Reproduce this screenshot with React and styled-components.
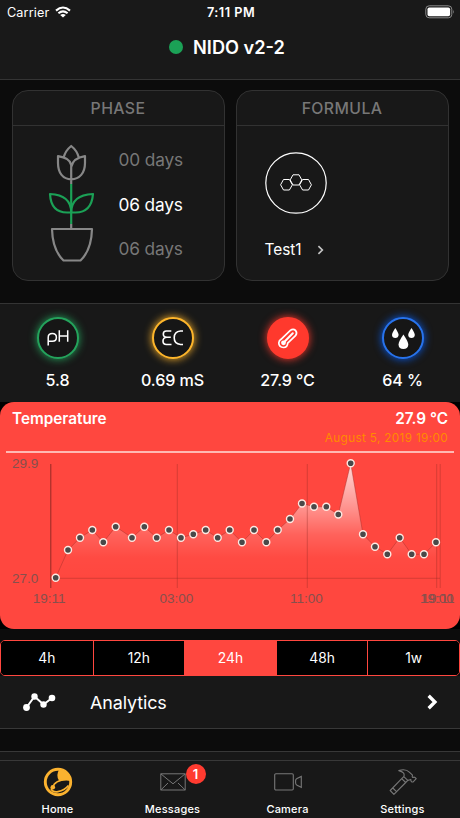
import { useState } from 'react';
import styled, { createGlobalStyle } from 'styled-components';

const GlobalStyle = createGlobalStyle`
  * {
    box-sizing: border-box;
  }

  body {
    margin: 0;
    background: #0c0c0c;
    color: #fff;
    font-family: Inter, 'Liberation Sans', sans-serif;
  }

  button {
    margin: 0;
    padding: 0;
    border: 0;
    background: none;
    color: inherit;
    font: inherit;
  }
`;

const Screen = styled.div`
  display: flex;
  flex-direction: column;
  width: 460px;
  height: 818px;
  overflow: hidden;
`;

const Header = styled.header`
  height: 80px;
  flex: none;
  background: #191919;
  border-bottom: 1px solid #343434;
`;

const StatusBar = styled.div`
  display: grid;
  grid-template-columns: 1fr auto 1fr;
  align-items: center;
  height: 24px;
  padding: 0 5px 0 7px;
  font-size: 12.7px;

  & > svg {
    justify-self: end;
  }
`;

const Carrier = styled.div`
  display: flex;
  align-items: center;
  gap: 6px;
  letter-spacing: 0.1px;
`;

const Clock = styled.div`
  font-weight: 600;
  letter-spacing: 0.5px;
`;

const Title = styled.h1`
  display: flex;
  align-items: center;
  justify-content: center;
  gap: 10px;
  height: 45px;
  margin: 0;
  padding-right: 6px;
  font-size: 18.2px;
  font-weight: 600;
  letter-spacing: 0;
`;

const Dot = styled.span`
  width: 14px;
  height: 14px;
  border-radius: 50%;
  background: #1ba156;
`;

const Cards = styled.section`
  display: grid;
  grid-template-columns: 213px 213px;
  gap: 11px;
  height: 223px;
  flex: none;
  padding: 10px 11px 22px 11.5px;
`;

const Card = styled.div`
  display: flex;
  flex-direction: column;
  background: #181818;
  border: 1px solid #323232;
  border-radius: 16px;
`;

const CardTitle = styled.h2`
  height: 35px;
  margin: 0;
  border-bottom: 1px solid #323232;
  color: #777;
  font-size: 15.8px;
  font-weight: 500;
  letter-spacing: 0.4px;
  line-height: 35px;
  text-align: center;
`;

const PhaseBody = styled.div`
  display: flex;
  padding: 12px 0 0 34px;
  gap: 24px;
`;

const PhaseList = styled.div`
  display: flex;
  flex-direction: column;
`;

const Days = styled.div`
  height: 44.5px;
  color: ${(props) => (props.$active ? '#fff' : '#777')};
  font-size: 17.3px;
  letter-spacing: -0.15px;
  line-height: 44px;
`;

const FormulaBody = styled.div`
  padding: 26px 0 0 28px;
`;

const FormulaName = styled.div`
  display: flex;
  align-items: center;
  gap: 15px;
  margin-top: 22px;
  font-size: 15.4px;
  line-height: 20px;
`;

const Sensors = styled.section`
  display: grid;
  grid-template-columns: repeat(4, 1fr);
  height: 99px;
  flex: none;
  border-top: 1px solid #343434;
  background: #181818;
`;

const Sensor = styled.div`
  display: flex;
  flex-direction: column;
  align-items: center;
  padding-top: 13px;
`;

const Ring = styled.div`
  display: flex;
  align-items: center;
  justify-content: center;
  width: 42px;
  height: 42px;
  border: 2px solid ${(props) => props.$color};
  border-radius: 50%;
  background: ${(props) => (props.$filled ? props.$color : '#161616')};
  box-shadow: 0 0 9px ${(props) => props.$glow || props.$color};
`;

const Reading = styled.div`
  margin-top: 11px;
  font-size: 16.1px;
  font-weight: 500;
  letter-spacing: -0.1px;
  line-height: 20px;
`;

const ChartWrap = styled.section`
  height: 227px;
  flex: none;
  background: #000;
`;

const ChartCard = styled.div`
  height: 100%;
  border-radius: 14px;
  background: #ff473f;
`;

const ChartHead = styled.div`
  display: grid;
  grid-template-columns: 1fr auto;
  grid-template-rows: 20px 20px;
  height: 51px;
  margin: 0 6px;
  padding: 7px 6px 0;
  border-bottom: 2px solid #ffb9b3;
  font-size: 15.3px;
  font-weight: 600;
  line-height: 20px;

  & > span:nth-child(2) {
    text-align: right;
  }
`;

const ChartDate = styled.span`
  grid-column: 1 / 3;
  color: #ff8a00;
  font-size: 11.8px;
  font-weight: 400;
  letter-spacing: 0.32px;
  line-height: 19px;
  text-align: right;
`;

const Chart = styled.svg`
  display: block;

  text {
    fill: #86504d;
    font-family: 'Liberation Sans', Arial, sans-serif;
    font-size: 13.5px;
    text-anchor: middle;
  }
`;

const Segments = styled.div`
  display: grid;
  grid-template-columns: repeat(5, 1fr);
  flex: none;
  height: 36px;
  margin-top: 11px;
  overflow: hidden;
  border: 1px solid #ff473f;
  border-radius: 5px;
  background: #000;
`;

const Segment = styled.button`
  background: ${(props) => (props.$active ? '#ff473f' : '#000')};
  font-size: 13.8px;
  letter-spacing: 0.1px;

  & + & {
    border-left: 1px solid #ff473f;
  }
`;

const AnalyticsRow = styled.div`
  display: flex;
  align-items: center;
  height: 53px;
  flex: none;
  padding: 0 22px;
  border-bottom: 1px solid #383838;
  background: #181818;
`;

const AnalyticsLabel = styled.span`
  flex: 1;
  margin-left: 34px;
  font-size: 17.9px;
  letter-spacing: -0.1px;
`;

const NextRow = styled.div`
  height: 9px;
  flex: none;
  margin-top: 22px;
  border-top: 1px solid #383838;
  background: #181818;
`;

const TabBar = styled.nav`
  display: grid;
  grid-template-columns: repeat(4, 1fr);
  flex: 1;
  border-top: 1px solid #383838;
  background: #181818;
`;

const Tab = styled.button`
  display: flex;
  flex-direction: column;
  align-items: center;
  padding-top: 5px;
  font-size: 11px;
  font-weight: 500;
  letter-spacing: 0.2px;
  line-height: 14px;
`;

const TabIcon = styled.span`
  position: relative;
  display: flex;
  align-items: center;
  justify-content: center;
  height: 32px;
  margin-bottom: 4px;
`;

const Badge = styled.span`
  position: absolute;
  top: -2px;
  left: 26px;
  width: 20px;
  height: 20px;
  border-radius: 50%;
  background: #ff3b30;
  font-size: 13px;
  font-weight: 600;
  line-height: 20px;
  text-align: center;
`;

const WifiIcon = () => (
  <svg width="16" height="12" viewBox="0 0 16 12">
    <path d="M8 11.6 5.2 8.900Q8 6.900 10.800 8.900Z" fill="#fff" />
    <path d="M3.400 7.200Q8 3.400 12.600 7.200M1 4.600Q8-1.600 15 4.600" fill="none" stroke="#fff" strokeWidth="2.100" />
  </svg>
);

const BatteryIcon = () => (
  <svg width="30" height="14" viewBox="0 0 30 14">
    <rect x="0.8" y="0.8" width="26" height="12" rx="3.4" fill="none" stroke="#8a8a8a" />
    <rect x="2.5" y="2.4" width="22.6" height="8.8" rx="1.8" fill="#fff" />
    <path d="M28.2 4.8q1.4 2 0 4z" fill="#8a8a8a" />
  </svg>
);

const PlantIcon = () => (
  <svg width="48" height="130" viewBox="46 138 48 130" fill="none" strokeWidth="2.200" strokeLinejoin="round">
    <g stroke="#878787">
      <path d="M70.2 184V165Q69 158 57 156.2V163C57 173 62 179.3 70.2 179.3C78.5 179.3 84 173 84 163V156.2Q72 158 70.2 167" />
      <path d="M62.6 157.5Q64.5 150.5 70.2 146Q76 150.5 77.8 157.5" />
      <path d="M70.2 224V228M51 229H91Q90.5 250 79.5 260.5H62.5Q51.500 250 51 229Z" />
    </g>
    <g stroke="#1ba156">
      <path d="M70.2 184V224" />
      <path d="M70.2 212.5Q70.2 195 49 194Q50 212.5 66 212.5H74.5Q90.5 212.5 92 194Q70.2 195 70.2 212.5" />
    </g>
  </svg>
);

const FormulaIcon = () => (
  <svg width="62" height="62" viewBox="0 0 62 62" fill="none" stroke="#fff">
    <circle cx="31" cy="31" r="30.2" strokeWidth="1.2" />
    <path d="M28 22.8H34L36.8 27.9L34 33H28L25.2 27.9Z" />
    <path d="M18.500 27.500H24.4L27.4 32.8L24.4 38H18.500L15.6 32.8Z" />
    <path d="M37.600 27.500H43.500L46.4 32.8L43.500 38H37.600L34.6 32.8Z" />
  </svg>
);

const ChevronIcon = ({ width, height, color, weight }) => (
  <svg width={width} height={height} viewBox="0 0 8 12" fill="none" stroke={color} strokeWidth={weight}>
    <path d="M1.500 1.300 6.200 6 1.500 10.700" />
  </svg>
);

const PhIcon = () => (
  <svg width="24" height="20" viewBox="0 0 24 20" fill="none" stroke="#fff" strokeWidth="1.5">
    <path d="M2.200 17.500V9.500C2.200 6.900 4 5.600 6.300 5.600C8.800 5.600 10.400 7.200 10.400 9.400C10.400 11.700 8.800 13.200 6.300 13.200H2.200" />
    <path d="M13.300 2.300V13.800M21.700 2.300V13.800M13.300 8H21.700" />
  </svg>
);

const EcIcon = () => (
  <svg width="24" height="18" viewBox="0 0 24 18" fill="none" stroke="#fff" strokeWidth="1.6">
    <path d="M10.300 2H5.300Q2.300 2 2.300 5Q2.300 8.300 6 8.300H9.800M6 8.300Q2 8.300 2 12Q2 15.500 5.500 15.500H10.500" />
    <path d="M22 2H19.500Q13.200 2.500 13.200 8.800Q13.200 15 19.500 15.500H22" />
  </svg>
);

const ThermometerIcon = () => (
  <svg width="24" height="24" viewBox="0 0 24 24" fill="none" stroke="#fff">
    <path d="M5 13.300 14.300 4.400Q17.200 2.300 19.600 4.500Q21.600 7 19.500 9.700L11.700 17.200Q11.500 21.300 7.500 21.500Q2.900 21 2.800 16.900Q3 14.600 5 13.300Z" strokeWidth="1.7" />
    <path d="M7.500 16.800 16.800 7.200" strokeWidth="2" strokeLinecap="round" />
    <circle cx="7.500" cy="16.800" r="2.4" fill="#fff" stroke="none" />
  </svg>
);

const DropsIcon = () => (
  <svg width="26" height="26" viewBox="0 0 26 26" fill="#fff">
    <path d="M5.300 3Q8.600 8 8.600 10Q8.300 13 5.300 13Q2.200 13 2 10Q2 8 5.300 3Z" />
    <path d="M21.500 3Q24.800 8 24.800 10Q24.500 13 21.500 13Q18.400 13 18.200 10Q18.200 8 21.500 3Z" />
    <path d="M13.400 9.500Q18.300 16.700 18.300 19.700Q17.800 24 13.400 24Q8.900 24 8.500 19.700Q8.500 16.700 13.400 9.500Z" />
  </svg>
);

const AnalyticsIcon = () => (
  <svg width="34" height="20" viewBox="0 0 34 20" fill="#fff">
    <path d="M4.500 15.500 12.500 4.500 21.500 12.500 30 6" fill="none" stroke="#fff" strokeWidth="2" />
    <circle cx="4.500" cy="15.500" r="3.4" />
    <circle cx="12.500" cy="4.500" r="3.2" />
    <circle cx="21.500" cy="12.500" r="3.2" />
    <circle cx="30" cy="6" r="3.3" />
  </svg>
);

const HomeIcon = () => (
  <svg width="30" height="30" viewBox="0 0 30 30">
    <circle cx="15" cy="15" r="12.7" fill="none" stroke="#fbb22f" strokeWidth="2.9" />
    <path d="M16.500 2Q12.300 8.500 16.200 14Q21.500 11.900 28 12.600Q27 5 20.500 2.700Z" fill="#fbb22f" />
    <path d="M28 13.300C22 11.600 14 13.500 11.200 17.300Q10 19 10.600 20.500" fill="none" stroke="#fbb22f" strokeWidth="1.700" />
    <circle cx="9.800" cy="20.300" r="2.300" fill="#fbb22f" />
    <path d="M8 21.500Q9.500 25.600 15 24.600Q21.500 23.500 25.500 18.500" fill="none" stroke="#fbb22f" strokeWidth="1.800" />
  </svg>
);

const MailIcon = () => (
  <svg width="26" height="18" viewBox="0 0 26 18" fill="none" stroke="#777">
    <path d="M0.800 0.800H25.200V17H0.800ZM0.800 0.800 13 10.800 25.200 0.800M0.800 17 8 10M25.200 17 18 10" />
  </svg>
);

const CameraIcon = () => (
  <svg width="28" height="18" viewBox="0 0 28 18" fill="none" stroke="#777" strokeWidth="1.1">
    <rect x="0.7" y="0.7" width="18.600" height="16.300" rx="1.2" />
    <path d="M27.300 3.400V14.300L23 12.200Q21.600 11.500 21.600 10V7.600Q21.600 6.200 23 5.500Z" />
  </svg>
);

const HammerIcon = () => (
  <svg width="28" height="28" viewBox="0 0 28 28" fill="none" stroke="#777" strokeWidth="1.1" strokeLinejoin="round">
    <path d="M1.200 22.500 12.700 10.700 16.700 14.500 4.900 26.300ZM3.800 20 7.500 23.700M12.700 10.700 14.800 8.600Q16.500 4.300 9.800 2.600Q16.500 0.300 20.600 4.300L23.500 7.200Q22.800 9.300 24 9.500Q25.500 8.500 27.200 10.600L24.200 13.900Q21.800 14.500 21.800 11.400Q20.200 12 18.800 12.400L16.700 14.500M14.800 8.600 18.800 12.400" />
  </svg>
);

const points = [
  [55.7, 577.7], [68, 550], [80, 537.7], [92.3, 530], [103.3, 542.3], [115.7, 526.7],
  [132, 537.7], [144.3, 526.7], [156.7, 537.7], [169, 530], [181, 537.7], [193.3, 534.3],
  [205.7, 530], [217.7, 537.7], [229.7, 530], [242, 542.3], [254, 530], [266.3, 542.3],
  [277.7, 530], [290, 519], [302, 503.5], [314, 506.8], [326.3, 506.8], [338.3, 514.5],
  [350.7, 463.3], [363, 534.3], [375, 546.7], [387.3, 554.3], [399.7, 537.7], [411.7, 554.3],
  [424, 554.3], [436, 542.3],
];

const line = points.map((p) => p.join(',')).join(' ');

const TemperatureChart = () => (
  <Chart width="460" height="175" viewBox="0 453 460 175">
    <defs>
      <linearGradient id="area" gradientUnits="userSpaceOnUse" x1="0" y1="463" x2="0" y2="578">
        <stop offset="0" stopColor="#fff" stopOpacity="0.8" />
        <stop offset="0.4" stopColor="#fff" stopOpacity="0.4" />
        <stop offset="0.62" stopColor="#fff" stopOpacity="0.15" />
        <stop offset="0.82" stopColor="#fff" stopOpacity="0.02" />
        <stop offset="1" stopColor="#fff" stopOpacity="0" />
      </linearGradient>
    </defs>
    <polygon points={`55.7,578 ${line} 436,578`} fill="url(#area)" />
    <g stroke="#8b2822" strokeOpacity="0.35">
      <path d="M50.800 464V588" strokeOpacity="0.9" />
      <path d="M177.300 464V588M307.300 464V588M436.700 464V588M440.200 464V588M51 578.300H440" />
    </g>
    <polyline points={line} fill="none" stroke="#a52f2a" strokeOpacity="0.45" />
    {points.map(([x, y]) => (
      <circle key={x} cx={x} cy={y} r="3.5" fill="#494949" stroke="#ffe9e2" strokeWidth="1.4" />
    ))}
    <text x="25.2" y="468.3">29.9</text>
    <text x="25.2" y="582.7">27.0</text>
    <text x="49.2" y="602.7">19:11</text>
    <text x="176.3" y="602.7">03:00</text>
    <text x="306.3" y="602.7">11:00</text>
    {/* the last tick and the end of the range share nearly the same spot */}
    <text x="436.8" y="602.7">19:00</text>
    <text x="438" y="602.7">19:11</text>
  </Chart>
);

const ranges = ['4h', '12h', '24h', '48h', '1w'];

function App() {
  const [range, setRange] = useState('24h');

  return (
    <Screen>
      <GlobalStyle />
      <Header>
        <StatusBar>
          <Carrier>
            Carrier
            <WifiIcon />
          </Carrier>
          <Clock>7:11 PM</Clock>
          <BatteryIcon />
        </StatusBar>
        <Title>
          <Dot />
          NIDO v2-2
        </Title>
      </Header>
      <Cards>
        <Card>
          <CardTitle>PHASE</CardTitle>
          <PhaseBody>
            <PlantIcon />
            <PhaseList>
              <Days>00 days</Days>
              <Days $active>06 days</Days>
              <Days>06 days</Days>
            </PhaseList>
          </PhaseBody>
        </Card>
        <Card>
          <CardTitle>FORMULA</CardTitle>
          <FormulaBody>
            <FormulaIcon />
            <FormulaName>
              Test1
              <ChevronIcon width={7} height={10} color="#c4c4c4" weight={2} />
            </FormulaName>
          </FormulaBody>
        </Card>
      </Cards>
      <Sensors>
        <Sensor>
          <Ring $color="#24a35c"><PhIcon /></Ring>
          <Reading>5.8</Reading>
        </Sensor>
        <Sensor>
          <Ring $color="#fdb52b"><EcIcon /></Ring>
          <Reading>0.69 mS</Reading>
        </Sensor>
        <Sensor>
          <Ring $color="#ff392d" $filled><ThermometerIcon /></Ring>
          <Reading>27.9 °C</Reading>
        </Sensor>
        <Sensor>
          <Ring $color="#2873ec" $glow="#075ced"><DropsIcon /></Ring>
          <Reading>64 %</Reading>
        </Sensor>
      </Sensors>
      <ChartWrap>
        <ChartCard>
          <ChartHead>
            <span>Temperature</span>
            <span>27.9 °C</span>
            <ChartDate>August 5, 2019 19:00</ChartDate>
          </ChartHead>
          <TemperatureChart />
        </ChartCard>
      </ChartWrap>
      <Segments>
        {ranges.map((item) => (
          <Segment key={item} $active={item === range} onClick={() => setRange(item)}>
            {item}
          </Segment>
        ))}
      </Segments>
      <AnalyticsRow>
        <AnalyticsIcon />
        <AnalyticsLabel>Analytics</AnalyticsLabel>
        <ChevronIcon width={12} height={16} color="#fff" weight={2.5} />
      </AnalyticsRow>
      <NextRow />
      <TabBar>
        <Tab>
          <TabIcon><HomeIcon /></TabIcon>
          Home
        </Tab>
        <Tab>
          <TabIcon>
            <MailIcon />
            <Badge>1</Badge>
          </TabIcon>
          Messages
        </Tab>
        <Tab>
          <TabIcon><CameraIcon /></TabIcon>
          Camera
        </Tab>
        <Tab>
          <TabIcon><HammerIcon /></TabIcon>
          Settings
        </Tab>
      </TabBar>
    </Screen>
  );
}

export default App;
